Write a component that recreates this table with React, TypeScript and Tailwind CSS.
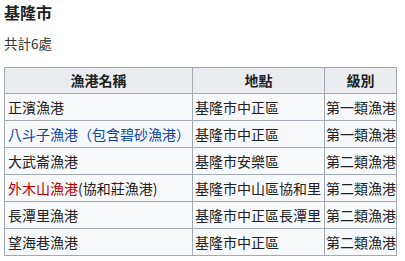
import React from "react";

const font = { fontFamily: '"Noto Sans CJK TC", "Noto Sans", sans-serif' };

type Row = { name: React.ReactNode; place: string; level: string };

const rows: Row[] = [
  { name: <span>正濱漁港</span>, place: "基隆市中正區", level: "第一類漁港" },
  {
    name: <span className="text-[#0645ad]">八斗子漁港（包含碧砂漁港）</span>,
    place: "基隆市中正區",
    level: "第一類漁港",
  },
  { name: <span>大武崙漁港</span>, place: "基隆市安樂區", level: "第二類漁港" },
  {
    name: (
      <span>
        <span className="text-[#ba0000]">外木山漁港</span>(協和莊漁港)
      </span>
    ),
    place: "基隆市中山區協和里",
    level: "第二類漁港",
  },
  { name: <span>長潭里漁港</span>, place: "基隆市中正區長潭里", level: "第二類漁港" },
  { name: <span>望海巷漁港</span>, place: "基隆市中正區", level: "第二類漁港" },
];

export default function App() {
  return (
    <div className="w-[405px] h-[261px] bg-white text-[#202122] px-[4px] pt-[2px]" style={font}>
      <div className="text-[16px] leading-[20px] font-bold">基隆市</div>
      <div className="mt-[11px] text-[13.5px] leading-[20px] text-[#333]">共計6處</div>
      <div className="mt-[14px] w-[393px] grid grid-cols-[188px_132px_72px] border-l border-t border-[#a2a9b1] bg-[#f8f9fa] text-[14px]">
        <div className="h-[26px] border-r border-b border-[#a2a9b1] bg-[#eaecf0] font-bold flex items-center justify-center">漁港名稱</div>
        <div className="h-[26px] border-r border-b border-[#a2a9b1] bg-[#eaecf0] font-bold flex items-center justify-center">地點</div>
        <div className="h-[26px] border-r border-b border-[#a2a9b1] bg-[#eaecf0] font-bold flex items-center justify-center">級別</div>
        {rows.map((r, i) => (
          <React.Fragment key={i}>
            <div className="h-[27px] border-r border-b border-[#a2a9b1] flex items-center pl-[3px] whitespace-nowrap overflow-hidden">{r.name}</div>
            <div className="h-[27px] border-r border-b border-[#a2a9b1] flex items-center pl-[2px] whitespace-nowrap overflow-hidden">{r.place}</div>
            <div className="h-[27px] border-r border-b border-[#a2a9b1] flex items-center pl-[1px] whitespace-nowrap overflow-hidden">{r.level}</div>
          </React.Fragment>
        ))}
      </div>
    </div>
  );
}
